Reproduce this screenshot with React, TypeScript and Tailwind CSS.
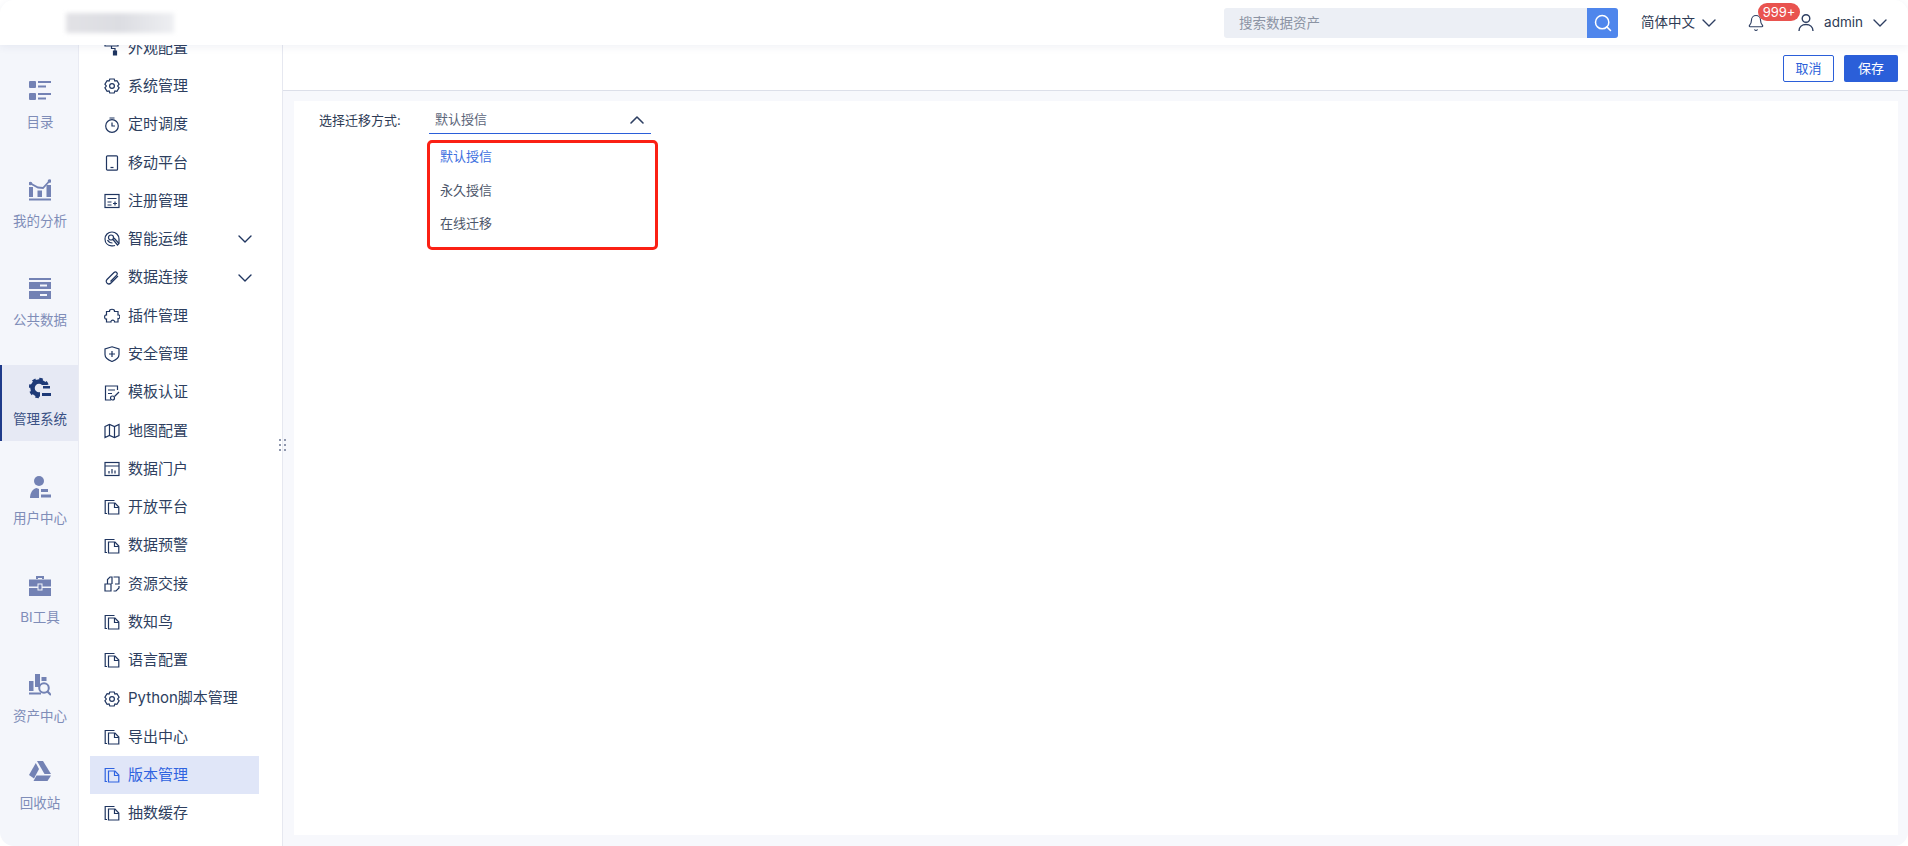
import { ReactNode } from 'react'
import { Bell, ChevronDown, ChevronUp, Search } from 'lucide-react'

const font = { fontFamily: 'Inter, "Noto Sans CJK SC", sans-serif' }

// icons for the left rail, 22px box
const railIcons: Record<string, ReactNode> = {
  catalog: (
    <>
      <rect x="0" y="1" width="7" height="7" rx="1" />
      <rect x="0" y="13" width="7" height="7" rx="1" />
      <rect x="9" y="1" width="13" height="2" />
      <rect x="9" y="5.500" width="8" height="2" />
      <rect x="9" y="13" width="13" height="2" />
      <rect x="9" y="17.500" width="8" height="2" />
    </>
  ),
  analysis: (
    <>
      <path d="M1.500 4.500 9 8.500 14 9 20.500 2" fill="none" stroke="currentColor" strokeWidth="1.800" />
      <circle cx="1.500" cy="4.500" r="1.800" />
      <circle cx="20.500" cy="2" r="1.800" />
      <rect x="0" y="8" width="4" height="10" />
      <rect x="8.500" y="11.500" width="4.500" height="6.500" />
      <rect x="17.500" y="6" width="4.500" height="12" />
      <rect x="0" y="19.500" width="22" height="2" />
    </>
  ),
  data: (
    <>
      <rect x="0" y="0" width="22" height="2" />
      <path d="M0 4h22v7H0zM11 6.500v2h7v-2z" fillRule="evenodd" />
      <path d="M0 13h22v8H0zM11 16v2h7v-2z" fillRule="evenodd" />
    </>
  ),
  manage: (
    <>
      {/* gear: ring plus dashed teeth, bottom right cut away for the bars */}
      <circle cx="10" cy="11" r="6.500" fill="none" stroke="currentColor" strokeWidth="4.500" />
      <circle cx="10" cy="11" r="9" fill="none" stroke="currentColor" strokeWidth="2.500" strokeDasharray="3.500 3.570" />
      <rect x="11" y="8" width="11" height="14" fill="#e6e9f4" />
      <rect x="14" y="9" width="7" height="2.500" />
      <rect x="13" y="16" width="9" height="3" />
    </>
  ),
  user: (
    <>
      <circle cx="10" cy="5" r="5" />
      <path d="M1 22c0-5 2.500-9 6.500-10l2.500 1v9z" />
      <rect x="12" y="13" width="7" height="3" />
      <rect x="12" y="18.500" width="10" height="3" />
    </>
  ),
  tool: (
    <>
      <path d="M7 1h8v3h-2V3H9v1H7z" />
      <rect x="0" y="4.500" width="22" height="7" />
      <rect x="0" y="13" width="22" height="8" />
      <rect x="9" y="9" width="4" height="6" stroke="#f4f6fb" strokeWidth="1" />
    </>
  ),
  asset: (
    <>
      <rect x="0" y="7" width="4.500" height="10" />
      <rect x="6" y="0" width="5" height="13" />
      <rect x="12.500" y="3" width="5" height="4" />
      <rect x="0" y="18.500" width="12" height="2" />
      <circle cx="15" cy="14" r="4.800" fill="none" stroke="currentColor" strokeWidth="2" />
      <path d="m18.500 17.500 3.500 3.500" stroke="currentColor" strokeWidth="2.200" fill="none" />
    </>
  ),
  trash: (
    <>
      <path d="M8 0h6l8 13h-6.500z" />
      <path d="M6.800 2 10 8l-5 9.500L0 14z" />
      <path d="M7.500 14.500H22L18.500 20H4.500z" />
    </>
  ),
}

const railItems = [
  { key: 'catalog', label: '目录' },
  { key: 'analysis', label: '我的分析' },
  { key: 'data', label: '公共数据' },
  { key: 'manage', label: '管理系统', active: true },
  { key: 'user', label: '用户中心' },
  { key: 'tool', label: 'BI工具' },
  { key: 'asset', label: '资产中心' },
  { key: 'trash', label: '回收站', last: true },
]

// icons for the second column, 16px box, stroked
const menuIcons: Record<string, ReactNode> = {
  paint: (
    <>
      <path d="M1 1h13v5H1z" />
      <path d="M7.500 6v2.500H11V15" />
      <path d="M9.500 11h3v4h-3z" fill="currentColor" />
    </>
  ),
  gear: (
    <>
      <path d="M5.800 1h4.400l.7 2 2-.4 2.200 3.600-1.400 1.800 1.400 1.800-2.200 3.600-2-.4-.7 2H5.800l-.7-2-2 .4L.9 9.800 2.300 8 .9 6.200l2.200-3.600 2 .4z" />
      <circle cx="8" cy="8" r="2.400" />
    </>
  ),
  timer: (
    <>
      <circle cx="8" cy="9" r="6.300" />
      <path d="M8 5.500V9h3M5.500 1h5" />
    </>
  ),
  mobile: (
    <>
      <rect x="2.500" y=".8" width="11" height="14.400" rx="1" />
      <path d="M6.500 12.500h3" />
    </>
  ),
  register: (
    <>
      <rect x="1" y="1.500" width="14" height="13" />
      <path d="M3.500 5.500h9M3.500 9h4M3.500 12h4M11 8.500v4M9 10.500h4" />
    </>
  ),
  ops: (
    <>
      <path d="M11 14.500A6.800 6.800 0 0 1 7.500 14.800C3.500 14.500 1 11.500 1 8 1 4 4 1 8 1c3.800 0 7 3 7 7v4" />
      <circle cx="7" cy="6.500" r="2.500" />
      <path d="m9 8.500 4.500 5.500 1.500-1.500L10 7M3.500 9c1 2 3 3 5 3" />
    </>
  ),
  clip: <path d="M14 6 7 13c-2.500 2.500-6.500-.8-4-3.500L10 2.500c1.800-1.800 4.500.8 2.700 2.700L6.500 11.500" />,
  puzzle: (
    <path d="M5.500 3.500c-.5-3 5.500-3 5 0h3.500v3.500c2.500-.5 2.500 4 0 3.500v3.500h-3.500c.5-2.500-4-2.500-3.500 0H2.500v-3c-2.500.5-2.500-4.500 0-4V3.500z" />
  ),
  shield: (
    <>
      <path d="M8 .8 15 3v5.500c0 3-3 5.500-7 7-4-1.500-7-4-7-7V3z" />
      <path d="M8 5v6M5 8h6" />
    </>
  ),
  template: (
    <>
      <path d="M13.500 5V1H1.500v14H7" />
      <path d="M4 5h7M4 8.500h4" />
      <circle cx="8.500" cy="13" r="2" />
      <path d="m10.500 11.500 4.500-4.500" />
    </>
  ),
  map: (
    <>
      <path d="M1 3.500 5.500 1.500l5 2 4.500-2v11l-4.500 2-5-2-4.500 2z" />
      <path d="M5.500 1.500v11M10.500 3.500v11" />
    </>
  ),
  portal: (
    <>
      <rect x="1" y="1.500" width="14" height="13" />
      <path d="M1 5h14M5 12.500V10M8 12.500V8M11 12.500V9.500" />
    </>
  ),
  copy: (
    <>
      <path d="M3 14.500H1.200V1.500h9.300" />
      <path d="M4.500 4h6.500l3.800 4v7H4.500z" />
      <path d="M10.500 4v4.500h4.300" />
    </>
  ),
  exchange: (
    <>
      <path d="M1 8h6v7H1zM3.500 8V3.500L6 1h2v7" />
      <path d="M9.500 1H15v7h-4M9.500 15H12l3-3v-2" />
    </>
  ),
}

const menuItems = [
  { icon: 'paint', label: '外观配置' },
  { icon: 'gear', label: '系统管理' },
  { icon: 'timer', label: '定时调度' },
  { icon: 'mobile', label: '移动平台' },
  { icon: 'register', label: '注册管理' },
  { icon: 'ops', label: '智能运维', arrow: true },
  { icon: 'clip', label: '数据连接', arrow: true },
  { icon: 'puzzle', label: '插件管理' },
  { icon: 'shield', label: '安全管理' },
  { icon: 'template', label: '模板认证' },
  { icon: 'map', label: '地图配置' },
  { icon: 'portal', label: '数据门户' },
  { icon: 'copy', label: '开放平台' },
  { icon: 'copy', label: '数据预警' },
  { icon: 'exchange', label: '资源交接' },
  { icon: 'copy', label: '数知鸟' },
  { icon: 'copy', label: '语言配置' },
  { icon: 'gear', label: 'Python脚本管理' },
  { icon: 'copy', label: '导出中心' },
  { icon: 'copy', label: '版本管理', active: true },
  { icon: 'copy', label: '抽数缓存' },
]

function Header() {
  return (
    <header className="relative z-10 h-[45px] shrink-0 flex items-center bg-white rounded-t-[14px] shadow-[0_2px_8px_rgba(40,60,110,0.07)]">
      {/* blurred out logo */}
      <div className="ml-[66px] w-[108px] h-[20px] bg-gradient-to-r from-[#e2e2e6] via-[#dcdde2] to-[#eeeff2] blur-[2px]" />
      <div className="ml-auto w-[394px] h-[30px] flex rounded-[3px] overflow-hidden bg-[#eceff5]">
        <span className="flex-1 pl-[15px] text-[13.500px] leading-[30px] text-[#8b93a3]">搜索数据资产</span>
        <span className="w-[31px] flex items-center justify-center bg-[#4f86ec]">
          <Search size={20} color="#fff" strokeWidth={1.8} />
        </span>
      </div>
      <span className="ml-[23px] text-[13.500px] text-[#2e3b55]">简体中文</span>
      <ChevronDown className="ml-[2px]" size={24} color="#2e3f62" strokeWidth={1.4} />
      <div className="relative ml-[26px] w-[18px] h-[18px]">
        <Bell size={18} color="#2e3f62" strokeWidth={1.5} />
        <span className="absolute left-[11px] -top-[11px] w-[42px] h-[18px] rounded-full bg-[#e9534f] text-white text-[13px] leading-[18px] text-center">
          999+
        </span>
      </div>
      <svg className="ml-[32px]" width="18" height="19" viewBox="0 0 18 19" fill="none" stroke="#2e3f62" strokeWidth="1.400">
        <circle cx="9" cy="5.500" r="3.800" />
        <path d="M2 18c0-4 3-6.500 7-6.500s7 2.500 7 6.500" />
      </svg>
      <span className="ml-[9px] text-[13.500px] text-[#2e3b55]">admin</span>
      <ChevronDown className="ml-[5px] mr-[16px]" size={24} color="#2e3f62" strokeWidth={1.4} />
    </header>
  )
}

function Rail() {
  return (
    <aside className="w-[79px] shrink-0 bg-[#f4f6fb] border-r border-[#e9ebf3] rounded-bl-[14px] flex flex-col pt-[23px]">
      {railItems.map(item => (
        <div
          key={item.key}
          className={`h-[76px] shrink-0 flex flex-col items-center pt-[12px] border-l-2 ${
            item.last ? '-mt-[12px]' : 'mb-[23px]'
          } ${item.active ? 'bg-[#e6e9f4] border-[#1e3a8a] text-[#1e3a78]' : 'border-transparent text-[#7382b4]'}`}
        >
          <svg width="22" height="22" viewBox="0 0 22 22" fill="currentColor">
            {railIcons[item.key]}
          </svg>
          <span className={`mt-[10px] text-[13.500px] leading-[20px] ${item.active ? 'text-[#3a5184]' : 'text-[#7f8db8]'}`}>
            {item.label}
          </span>
        </div>
      ))}
    </aside>
  )
}

function SubMenu() {
  return (
    <nav className="relative w-[203px] shrink-0 bg-white overflow-hidden pl-[11px] pr-[23px]">
      <div className="-mt-[16px]">
        {menuItems.map(item => (
          <div
            key={item.label}
            className={`h-[38.280px] flex items-center pl-[14px] text-[15px] ${
              item.active ? 'bg-[#e0e6f8] text-[#2f63e0]' : 'text-[#2e3f5f]'
            }`}
          >
            <svg
              className={`w-[16px] h-[16px] mr-[8px] shrink-0 ${item.active ? 'text-[#2f63e0]' : 'text-[#1f3560]'}`}
              viewBox="0 0 16 16"
              fill="none"
              stroke="currentColor"
              strokeWidth="1.200"
            >
              {menuIcons[item.icon]}
            </svg>
            <span>{item.label}</span>
            {item.arrow && <ChevronDown className="ml-auto mr-[2px]" size={24} color="#1f3560" strokeWidth={1.4} />}
          </div>
        ))}
      </div>
    </nav>
  )
}

function Content() {
  return (
    <main className="relative flex-1 min-w-0 flex flex-col bg-[#f7f8fc] border-l border-[#e6e8f0] rounded-br-[14px]">
      {/* drag handle between menu and page */}
      <div className="absolute left-[-4px] top-[394px] grid grid-cols-2 gap-x-[3px] gap-y-[3px]">
        {[0, 1, 2, 3, 4, 5].map(i => (
          <span key={i} className="w-[2px] h-[2px] bg-[#8f97ad]" />
        ))}
      </div>
      <div className="h-[46px] shrink-0 bg-white border-b border-[#dcdfe9] flex items-center justify-end gap-[10px] pr-[10px] pt-[2px]">
        <button className="w-[51px] h-[27px] rounded-[2px] border border-[#2b5fd9] bg-white text-[13px] text-[#2b5fd9]">取消</button>
        <button className="w-[54px] h-[27px] rounded-[2px] bg-[#2b5fd9] text-[13px] text-white">保存</button>
      </div>
      <div className="flex-1 min-h-0 ml-[11px] mr-[10px] mt-[10px] mb-[11px] bg-white">
        <div className="flex pl-[25px] pt-[6px]">
          <span className="w-[110px] h-[27px] leading-[27px] text-[13px] text-[#2e3b55]">选择迁移方式:</span>
          <div className="relative w-[222px]">
            <div className="h-[27px] flex items-center pl-[6px] pr-[2px] border-b border-[#2b5fd9] text-[13px] text-[#5b6579]">
              默认授信
              <ChevronUp className="ml-auto" size={24} color="#2e3f62" strokeWidth={1.6} />
            </div>
            <ul className="absolute -left-[2px] top-[33px] w-[231px] h-[110px] bg-white border-[3px] border-[#fb2014] rounded-[5px] text-[13px]">
              <li className="h-[33.500px] -mt-[3px] flex items-center pl-[10px] text-[#3d6fe0]">默认授信</li>
              <li className="h-[33.500px] flex items-center pl-[10px] text-[#4c566a]">永久授信</li>
              <li className="h-[33.500px] flex items-center pl-[10px] text-[#4c566a]">在线迁移</li>
            </ul>
          </div>
        </div>
      </div>
    </main>
  )
}

export default function App() {
  return (
    <div className="w-[1908px] h-[846px] flex flex-col overflow-hidden bg-white" style={font}>
      <Header />
      <div className="flex-1 min-h-0 flex">
        <Rail />
        <SubMenu />
        <Content />
      </div>
    </div>
  )
}
